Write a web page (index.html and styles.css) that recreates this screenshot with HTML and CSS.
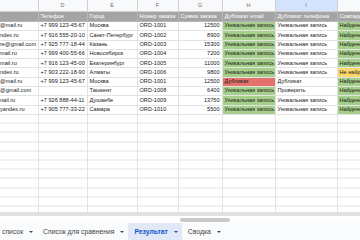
FILE: index.html
```html
<!DOCTYPE html>
<html>
<head>
    <meta charset="utf-8">
    <title>Результат</title>
    <link rel="stylesheet" href="styles.css">
</head>
<body>
    <div class="sheet">
        <table class="grid">
            <colgroup>
                <col class="w-c"><col class="w-d"><col class="w-e"><col class="w-f">
                <col class="w-g"><col class="w-h"><col class="w-i"><col class="w-j">
            </colgroup>
            <tr class="letters">
                <td></td><td>D</td><td>E</td><td>F</td><td>G</td><td>H</td><td class="picked">I</td><td>J</td>
            </tr>
            <tr class="head">
                <td></td><td>Телефон</td><td>Город</td><td>Номер заказа</td><td>Сумма заказа</td><td>Дубликат email</td><td>Дубликат телефона</td><td>Совпадение</td>
            </tr>
            <tr>
                <td class="mail">@mail.ru</td><td>+7 999 123-45-67</td><td>Москва</td><td>ORD-1001</td><td class="num">12500</td>
                <td class="ok">Уникальная запись</td><td>Уникальная запись</td><td class="ok">Найдено</td>
            </tr>
            <tr>
                <td class="mail">ndex.ru</td><td>+7 916 555-20-10</td><td>Санкт-Петербург</td><td>ORD-1002</td><td class="num">8900</td>
                <td class="ok">Уникальная запись</td><td>Уникальная запись</td><td class="ok">Найдено</td>
            </tr>
            <tr>
                <td class="mail">re@gmail.com</td><td>+7 925 777-18-44</td><td>Казань</td><td>ORD-1003</td><td class="num">15300</td>
                <td class="ok">Уникальная запись</td><td>Уникальная запись</td><td class="ok">Найдено</td>
            </tr>
            <tr>
                <td class="mail">mail.ru</td><td>+7 999 400-55-66</td><td>Новосибирск</td><td>ORD-1004</td><td class="num">7200</td>
                <td class="ok">Уникальная запись</td><td>Уникальная запись</td><td class="ok">Найдено</td>
            </tr>
            <tr>
                <td class="mail">mail.ru</td><td>+7 916 123-45-00</td><td>Екатеринбург</td><td>ORD-1005</td><td class="num">11000</td>
                <td class="ok">Уникальная запись</td><td>Уникальная запись</td><td class="ok">Найдено</td>
            </tr>
            <tr>
                <td class="mail">ndex.ru</td><td>+7 903 222-18-90</td><td>Алматы</td><td>ORD-1006</td><td class="num">9800</td>
                <td class="ok">Уникальная запись</td><td>Уникальная запись</td><td class="warn">Не найдено</td>
            </tr>
            <tr>
                <td class="mail">@mail.ru</td><td>+7 999 123-45-67</td><td>Москва</td><td>ORD-1001</td><td class="num">12500</td>
                <td class="dup">Дубликат</td><td>Дубликат</td><td class="ok">Найдено</td>
            </tr>
            <tr>
                <td class="mail">@gmail.com</td><td></td><td>Ташкент</td><td>ORD-1008</td><td class="num">6400</td>
                <td class="ok">Уникальная запись</td><td>Проверить</td><td class="ok">Найдено</td>
            </tr>
            <tr>
                <td class="mail">nail.ru</td><td>+7 926 888-44-11</td><td>Душанбе</td><td>ORD-1009</td><td class="num">13750</td>
                <td class="ok">Уникальная запись</td><td>Уникальная запись</td><td class="ok">Найдено</td>
            </tr>
            <tr>
                <td class="mail">yandex.ru</td><td>+7 905 777-33-22</td><td>Самара</td><td>ORD-1010</td><td class="num">5500</td>
                <td class="ok">Уникальная запись</td><td>Уникальная запись</td><td class="ok">Найдено</td>
            </tr>
            <tr class="rest">
                <td></td><td></td><td></td><td></td><td></td><td></td><td></td><td></td>
            </tr>
        </table>
    </div>
    <div class="scroll"><div class="thumb"></div></div>
    <div class="tabs">
        <div class="tab first">список <svg class="caret" viewBox="0 0 4 2"><path d="M0 0h4L2 2z"/></svg></div>
        <div class="tab">Список для сравнения <svg class="caret" viewBox="0 0 4 2"><path d="M0 0h4L2 2z"/></svg></div>
        <div class="tab active">Результат <svg class="caret" viewBox="0 0 4 2"><path d="M0 0h4L2 2z"/></svg></div>
        <div class="tab">Сводка <svg class="caret" viewBox="0 0 4 2"><path d="M0 0h4L2 2z"/></svg></div>
    </div>
</body>
</html>
```
FILE: styles.css
```css
body {
    margin: 0;
    width: 360px;
    height: 240px;
    overflow: hidden;
    background: #fff;
    font-family: "Liberation Sans", Arial, sans-serif;
    color: #1a1a1a;
}
.sheet {
    height: 212px;
    overflow: hidden;
}
.grid {
    border-collapse: collapse;
    table-layout: fixed;
    width: 400px;
    font-size: 5.6px;
}
.w-c { width: 38px; }
.w-d { width: 49px; }
.w-e { width: 50px; }
.w-f { width: 41px; }
.w-g { width: 44px; }
.w-h { width: 53px; }
.w-i { width: 62px; }
.w-j { width: 63px; }
.grid td {
    height: 8.3px;
    padding: 0 2px;
    border: 1px solid #e2e3e3;
    border-top: 0;
    border-left: 0;
    white-space: nowrap;
    overflow: hidden;
    line-height: 1;
    vertical-align: middle;
}
.letters td {
    height: 11px;
    background: #f8f9fa;
    color: #6e6e6e;
    text-align: center;
    font-size: 5.4px;
    border-color: #d0d0d0;
}
.letters td.picked {
    background: #d3e3fd;
}
.head td {
    height: 9px;
    background: #a4a4a4;
    color: #fff;
    border-color: #b6b6b6;
}
.grid td.mail {
    padding-left: 0;
}
.grid td.num {
    text-align: right;
}
.ok {
    background: #a5cf8b;
}
.dup {
    background: #e4716c;
}
.warn {
    background: #fcd86b;
}
.rest td {
    height: 110px;
    vertical-align: top;
    background: repeating-linear-gradient(to bottom, transparent 0 8.2px, #e2e3e3 8.2px 9.2px);
}
.scroll {
    height: 11px;
    box-sizing: border-box;
    border-top: 4px solid #e1e1e1;
    background: #fff;
}
.thumb {
    margin: 2px 0 0 180px;
    width: 50px;
    height: 4px;
    border-radius: 2px;
    background: #c9c9c9;
}
.tabs {
    display: flex;
    height: 17px;
    background: #f9fbfd;
    font-size: 6.8px;
    color: #444746;
}
.tab {
    display: flex;
    align-items: center;
    gap: 6px;
    padding: 0 4px 0 6px;
    white-space: nowrap;
}
.tab.first {
    margin-left: -4px;
}
.tab.active {
    background: #e1e9f7;
    color: #0b57d0;
    font-weight: bold;
}
.caret {
    width: 4px;
    height: 2px;
    fill: currentColor;
}
```
